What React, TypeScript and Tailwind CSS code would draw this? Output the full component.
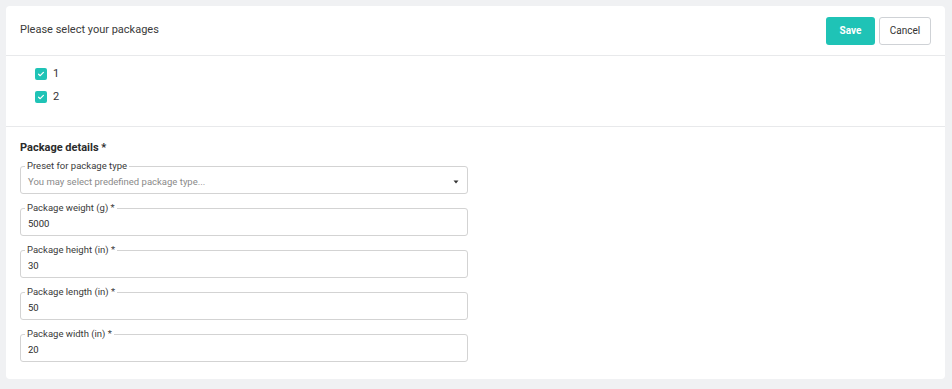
import { useState } from "react";

type Field = { label: string; value: string };

const fields: Field[] = [
  { label: "Package weight (g) *", value: "5000" },
  { label: "Package height (in) *", value: "30" },
  { label: "Package length (in) *", value: "50" },
  { label: "Package width (in) *", value: "20" },
];

function Check({ checked, label, onToggle }: { checked: boolean; label: string; onToggle: () => void }) {
  return (
    <label className="flex items-center gap-[6px] h-[12px] cursor-pointer" onClick={onToggle}>
      <span
        className={`w-[12px] h-[12px] rounded-[2px] flex items-center justify-center ${
          checked ? "bg-[#1fc3b6]" : "border border-[#c8c8c8] bg-white"
        }`}
      >
        {checked && (
          <svg width="8" height="8" viewBox="0 0 8 8" fill="none">
            <path d="M1.6 4.2 3.2 5.7 6.4 2.4" stroke="white" strokeWidth="1.2" strokeLinecap="round" strokeLinejoin="round" />
          </svg>
        )}
      </span>
      <span className="text-[11px] text-[#333]">{label}</span>
    </label>
  );
}

function Outlined({ label, children }: { label: string; children: React.ReactNode }) {
  return (
    <fieldset className="w-[448px] border border-[#d3d3d3] rounded-[3px] pl-[7px] pr-[10px] pb-[5px] pt-0 m-0 min-w-0">
      <legend className="text-[9.5px] leading-[12px] text-[#3a3a3a] px-[2px] -ml-[3px]">{label}</legend>
      {children}
    </fieldset>
  );
}

export default function App() {
  const [selected, setSelected] = useState([true, true]);

  return (
    <div className="min-h-screen bg-[#f0f1f3] px-[6px] pt-[6px] pb-[11px]" style={{ fontFamily: "Roboto, 'Noto Sans', sans-serif" }}>
      <div className="bg-white rounded-[4px] w-[939px]">
        {/* header */}
        <div className="h-[50px] px-[14px] flex items-center justify-between border-b border-[#e8e9eb]">
          <h1 className="text-[11px] text-[#3a3a3a]">Please select your packages</h1>
          <div className="flex gap-[4px]">
            <button className="w-[49px] h-[28px] rounded-[3px] bg-[#1fc3b6] text-white text-[10px] font-bold">Save</button>
            <button className="w-[52px] h-[28px] rounded-[3px] border border-[#cfd2d6] bg-white text-[#333] text-[10px]">Cancel</button>
          </div>
        </div>

        {/* packages */}
        <div className="pl-[29px] pt-[12px] pb-[23px] flex flex-col gap-[11px] border-b border-[#e8e9eb]">
          {["1", "2"].map((p, i) => (
            <Check
              key={p}
              label={p}
              checked={selected[i]}
              onToggle={() => setSelected((s) => s.map((v, j) => (j === i ? !v : v)))}
            />
          ))}
        </div>

        {/* details */}
        <div className="px-[14px] pt-[14px] pb-[17px]">
          <h2 className="text-[11px] font-bold text-[#2b2b2b] leading-[14px] mb-[5px]">Package details *</h2>
          <div className="flex flex-col gap-[8px]">
            <Outlined label="Preset for package type">
              <div className="flex items-center justify-between">
                <span className="text-[9.5px] leading-[12px] text-[#8a8a8a] pt-[4px]">You may select predefined package type...</span>
                <svg width="6" height="4" viewBox="0 0 6 4" className="mt-[4px] -mr-[2px]">
                  <path d="M0.5 0.5h5L3 3.5z" fill="#333" />
                </svg>
              </div>
            </Outlined>
            {fields.map((f) => (
              <Outlined key={f.label} label={f.label}>
                <div className="text-[9.5px] leading-[12px] text-[#2b2b2b] pt-[4px]">{f.value}</div>
              </Outlined>
            ))}
          </div>
        </div>
      </div>
    </div>
  );
}
